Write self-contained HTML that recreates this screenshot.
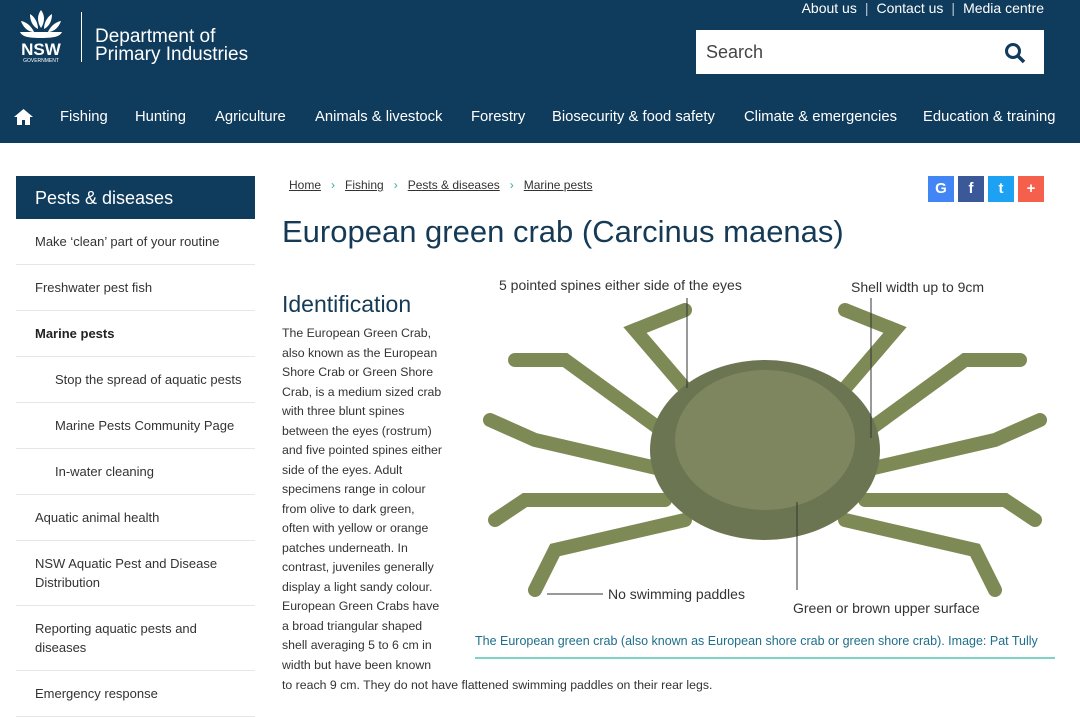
<!DOCTYPE html>
<html><head><meta charset="utf-8"><style>
body{margin:0;width:1080px;height:702px;overflow:hidden;background:#fff;font-family:"Liberation Sans",sans-serif;color:#333}
.hdr{position:absolute;left:0;top:0;width:1080px;height:143px;background:#0f3b5c}
.top{position:absolute;top:0;right:36px;color:#fff;font-size:14px}
.top span{margin:0 8px;opacity:.7}
.search{position:absolute;left:696px;top:30px;width:348px;height:44px;background:#fff}
.search div{position:absolute;left:10px;top:12px;font-size:18px;color:#444}
.nav{position:absolute;top:109px;left:0;color:#fff;font-size:14.8px;white-space:nowrap}
.nav span{position:absolute}
.side{position:absolute;left:16px;top:176px;width:239px}
.side .h{background:#0f3b5c;color:#fff;font-size:18px;height:43px;line-height:44px;padding-left:19px}
.side .i{border-bottom:1px solid #e6e6e6;font-size:13px;line-height:19.5px;padding-left:19px;color:#333;display:flex;align-items:center}
h1{position:absolute;left:282px;top:214px;margin:0;font-weight:normal;font-size:31px;color:#153a55}
h2{position:absolute;left:282px;top:291px;margin:0;font-weight:normal;font-size:23px;color:#153a55}
.txt{position:absolute;left:282px;top:324px;width:160px;font-size:12.3px;line-height:19.5px}
.bc{position:absolute;left:289px;top:178px;font-size:12px;color:#333}
.bc u{margin-right:10px}.bc b{color:#3aa;margin-right:10px;font-weight:normal}
.soc{position:absolute;top:176px;width:26px;height:26px;color:#fff;font-size:15px;font-weight:bold;text-align:center;line-height:26px}
</style></head><body>
<div class="hdr">
<svg style="position:absolute;left:16px;top:8px" width="50" height="56" viewBox="0 0 50 56"><g fill="#fff"><path d="M25 2c4 5 4 12 0 18c-4-6-4-13 0-18zM14 6c5 3 8 9 8 15c-6-3-8-9-8-15zM36 6c0 6-2 12-8 15c0-6 3-12 8-15zM5 13c6 1 11 6 13 11c-6 0-11-5-13-11zM45 13c-2 6-7 11-13 11c2-5 7-10 13-11zM4 24h42c-2 4-6 6-21 6S6 28 4 24z"/></g><text x="25" y="47" fill="#fff" font-size="17" font-weight="bold" text-anchor="middle" font-family="Liberation Sans">NSW</text><text x="25" y="54" fill="#fff" font-size="5" text-anchor="middle" font-family="Liberation Sans">GOVERNMENT</text></svg>
<div style="position:absolute;left:81px;top:12px;width:1px;height:50px;background:#fff"></div>
<div style="position:absolute;left:95px;top:28px;color:#fff;font-size:19px;line-height:18px">Department of<br>Primary Industries</div>
<div class="top">About us<span>|</span>Contact us<span>|</span>Media centre</div>
<div class="search"><div>Search</div><svg style="position:absolute;left:308px;top:12px" width="22" height="22" viewBox="0 0 22 22"><circle cx="9" cy="9" r="6.5" stroke="#0f3b5c" stroke-width="3" fill="none"/><path d="M14 14l6 6" stroke="#0f3b5c" stroke-width="3.5"/></svg></div>
<div class="nav">
<svg style="position:absolute;left:14px;top:0" width="19" height="16" viewBox="0 0 19 16"><path d="M9.5 0L0 8h3v8h5v-5h3v5h5V8h3z" fill="#fff"/></svg>
<span style="left:60px">Fishing</span><span style="left:135px">Hunting</span><span style="left:215px">Agriculture</span><span style="left:315px">Animals &amp; livestock</span><span style="left:471px">Forestry</span><span style="left:552px">Biosecurity &amp; food safety</span><span style="left:744px">Climate &amp; emergencies</span><span style="left:923px">Education &amp; training</span>
</div></div>
<div class="side"><div class="h">Pests &amp; diseases</div>
<div class="i" style="height:45px">Make ‘clean’ part of your routine</div>
<div class="i" style="height:45px">Freshwater pest fish</div>
<div class="i" style="height:45px;font-weight:bold;color:#222">Marine pests</div>
<div class="i" style="height:45px;padding-left:39px">Stop the spread of aquatic pests</div>
<div class="i" style="height:45px;padding-left:39px">Marine Pests Community Page</div>
<div class="i" style="height:45px;padding-left:39px">In-water cleaning</div>
<div class="i" style="height:45px">Aquatic animal health</div>
<div class="i" style="height:64px">NSW Aquatic Pest and Disease<br>Distribution</div>
<div class="i" style="height:64px">Reporting aquatic pests and<br>diseases</div>
<div class="i" style="height:45px">Emergency response</div>
</div>
<div class="bc"><u>Home</u><b>›</b><u>Fishing</u><b>›</b><u>Pests &amp; diseases</u><b>›</b><u>Marine pests</u></div>
<div class="soc" style="left:928px;background:#4285f4">G</div><div class="soc" style="left:958px;background:#3b5998">f</div><div class="soc" style="left:988px;background:#1da1f2">t</div><div class="soc" style="left:1018px;background:#f4604c">+</div>
<h1>European green crab (Carcinus maenas)</h1>
<h2>Identification</h2>
<div class="txt">The European Green Crab, also known as the European Shore Crab or Green Shore Crab, is a medium sized crab with three blunt spines between the eyes (rostrum) and five pointed spines either side of the eyes. Adult specimens range in colour from olive to dark green, often with yellow or orange patches underneath. In contrast, juveniles generally display a light sandy colour. European Green Crabs have a broad triangular shaped shell averaging 5 to 6 cm in width but have been known</div>
<div style="position:absolute;left:282px;top:678px;font-size:12.3px">to reach 9 cm. They do not have flattened swimming paddles on their rear legs.</div>
<svg style="position:absolute;left:475px;top:270px" width="580" height="355" viewBox="0 0 580 355" font-family="Liberation Sans" font-size="14" fill="#333">
<g stroke="#7d8a55" stroke-width="14" stroke-linecap="round" fill="none">
<path d="M200 170L90 90L40 90"/><path d="M190 200L60 170L15 150"/><path d="M190 230L50 230L20 250"/><path d="M210 250L80 280L60 320"/>
<path d="M380 170L490 90L545 90"/><path d="M390 200L520 170L565 150"/><path d="M390 230L530 230L560 250"/><path d="M370 250L500 280L520 320"/>
<path d="M220 130L160 60L210 40"/><path d="M360 130L420 60L370 40"/>
</g>
<ellipse cx="290" cy="180" rx="115" ry="90" fill="#6c7552"/>
<ellipse cx="290" cy="170" rx="90" ry="70" fill="#7d865f"/>
<text x="24" y="20">5 pointed spines either side of the eyes</text>
<text x="376" y="22">Shell width up to 9cm</text>
<text x="133" y="329">No swimming paddles</text>
<text x="318" y="343">Green or brown upper surface</text>
<path d="M212 28V118M396 28V168M322 232V320M72 324H128" stroke="#333" stroke-width="1"/>
</svg>
<div style="position:absolute;left:475px;top:634px;font-size:12.5px;color:#1e6e8c">The European green crab (also known as European shore crab or green shore crab). Image: Pat Tully</div>
<div style="position:absolute;left:475px;top:657px;width:580px;height:2px;background:#7fd3c6"></div>
</body></html>
